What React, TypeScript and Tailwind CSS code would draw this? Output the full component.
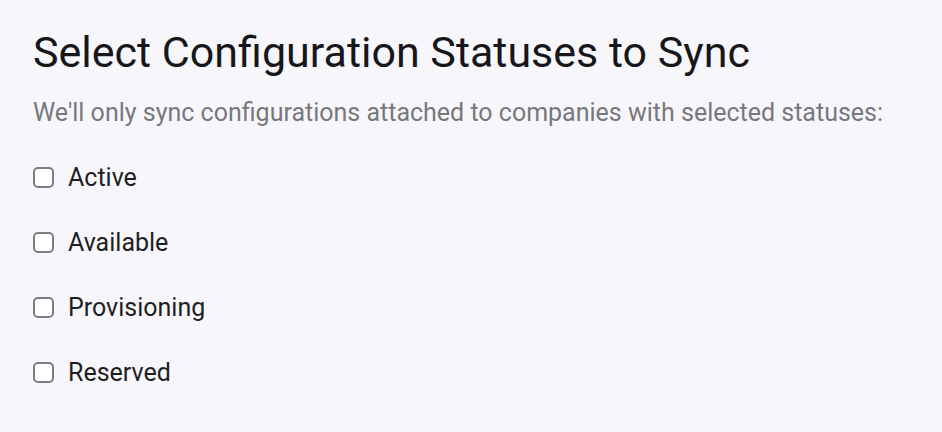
const statuses = ['Active', 'Available', 'Provisioning', 'Reserved']

export default function App() {
  return (
    <div className="min-h-[432px] w-full bg-[#f7f7fb] px-[33px] pt-[26px] font-['Roboto',sans-serif]">
      <h1 className="text-[43px] leading-[52px] text-[#17171b]">Select Configuration Statuses to Sync</h1>
      <p className="mt-[20px] text-[25px] leading-[30px] text-[#78777d]">
        We'll only sync configurations attached to companies with selected statuses:
      </p>
      <div className="mt-[17px] flex flex-col">
        {statuses.map((s) => (
          <label key={s} className="flex h-[65px] items-center gap-[14px]">
            <span className="h-[21px] w-[21px] shrink-0 rounded-[5px] border-2 border-[#7d7c82] bg-white" />
            <span className="text-[25px] leading-[30px] text-[#1f1f23]">{s}</span>
          </label>
        ))}
      </div>
    </div>
  )
}
